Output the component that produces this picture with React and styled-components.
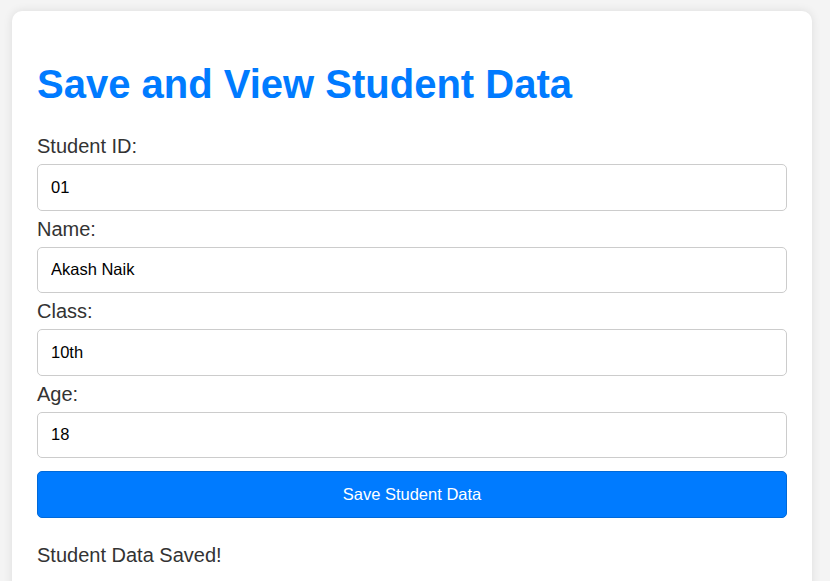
import React from 'react';
import styled, { createGlobalStyle } from 'styled-components';

const Global = createGlobalStyle`
  body {
    margin: 0;
    padding: 11px 0 0 12px;
    background-color: #f4f4f4;
    font-family: "Liberation Sans", Arial, sans-serif;
    overflow: hidden;
  }
`;

const Card = styled.div`
  width: 800px;
  box-sizing: border-box;
  background-color: #fff;
  border-radius: 10px;
  box-shadow: 0 0 10px rgba(0, 0, 0, 0.1);
  padding: 25px 25px 40px;
  min-height: 600px;

  h1 {
    color: #007bff;
    font-size: 40px;
    margin: 26px 0 28px;
  }
`;

const Form = styled.form`
  display: flex;
  flex-direction: column;
`;

const Label = styled.label`
  display: block;
  font-size: 20px;
  line-height: 22px;
  color: #333;
  margin: 0 0 7px;
`;

const Input = styled.input`
  box-sizing: border-box;
  width: 100%;
  height: 46.5px;
  padding: 0 13px;
  font-family: "Liberation Sans", Arial, sans-serif;
  font-size: 16.5px;
  color: #000;
  border: 1px solid #ccc;
  border-radius: 5px;
  margin: 0 0 7px;
`;

const Button = styled.button`
  box-sizing: border-box;
  width: 100%;
  height: 47px;
  margin-top: 5.5px;
  background-color: #007bff;
  color: #fff;
  font-family: "Liberation Sans", Arial, sans-serif;
  font-size: 16.5px;
  border: 1px solid #0069d9;
  border-radius: 5px;
  cursor: pointer;
`;

const Message = styled.p`
  font-size: 20px;
  line-height: 22px;
  color: #333;
  margin: 26px 0 0;
`;

const fields = [
  { label: 'Student ID:', value: '01' },
  { label: 'Name:', value: 'Akash Naik' },
  { label: 'Class:', value: '10th' },
  { label: 'Age:', value: '18' },
];

const App = () => {
  return (
    <>
      <Global />
      <Card>
        <h1>Save and View Student Data</h1>
        <Form onSubmit={(e) => e.preventDefault()}>
          {fields.map((f) => (
            <div key={f.label}>
              <Label>{f.label}</Label>
              <Input type="text" defaultValue={f.value} />
            </div>
          ))}
          <Button type="submit">Save Student Data</Button>
        </Form>
        <Message>Student Data Saved!</Message>
      </Card>
    </>
  );
};

export default App;
